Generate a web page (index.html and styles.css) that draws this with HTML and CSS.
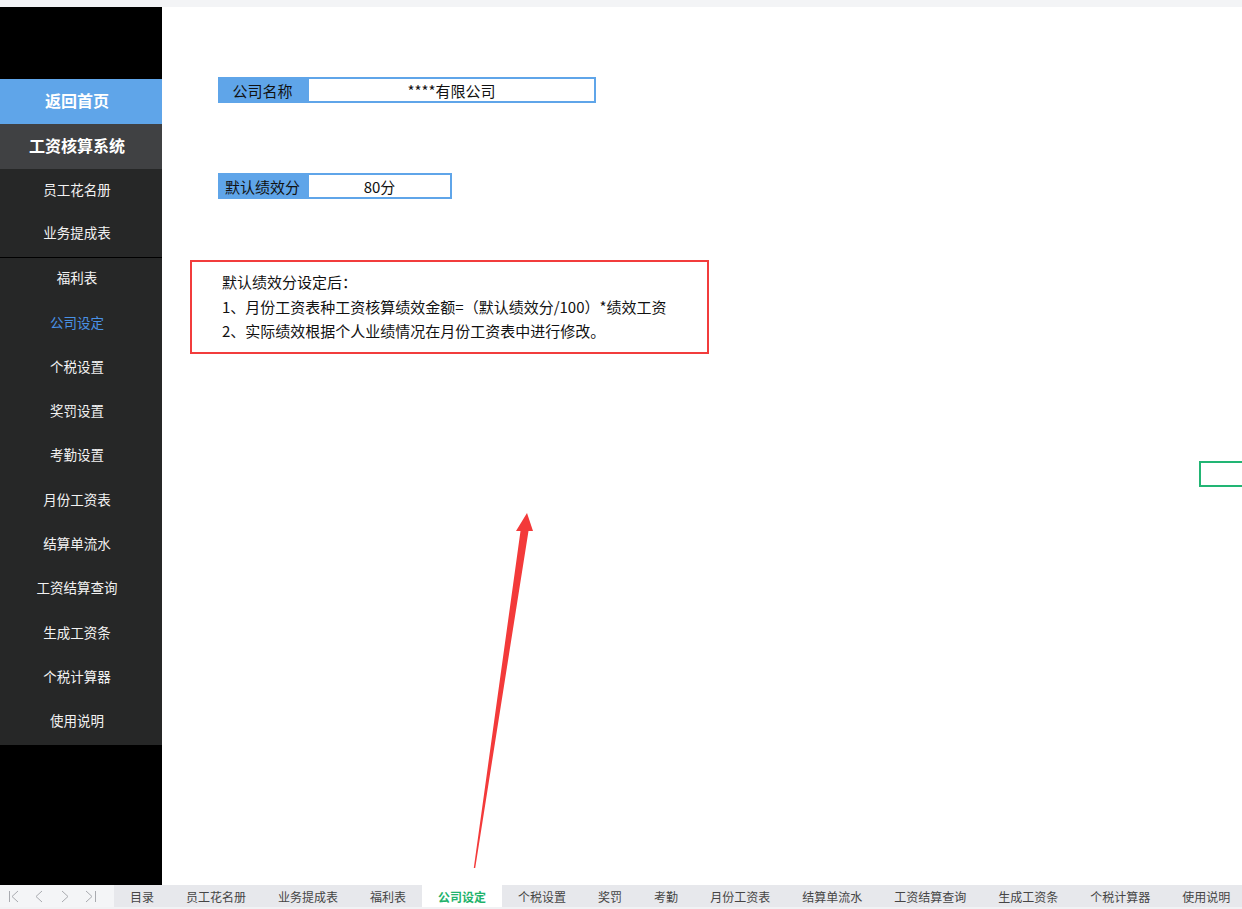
FILE: index.html
```html
<!DOCTYPE html>
<html lang="zh-CN">
<head>
  <meta charset="UTF-8" />
  <title>公司设定 - 工资核算系统</title>
  <link rel="stylesheet" href="styles.css">
</head>
<body>
  <div class="topbar"></div>
  <div class="workspace">
    <aside class="sidebar">
      <div class="sb-blank"></div>
      <div class="sb-home">返回首页</div>
      <div class="sb-title">工资核算系统</div>
      <ul class="menu">
        <li>员工花名册</li>
        <li class="split">业务提成表</li>
        <li>福利表</li>
        <li class="current">公司设定</li>
        <li>个税设置</li>
        <li>奖罚设置</li>
        <li>考勤设置</li>
        <li>月份工资表</li>
        <li>结算单流水</li>
        <li>工资结算查询</li>
        <li>生成工资条</li>
        <li>个税计算器</li>
        <li>使用说明</li>
      </ul>
    </aside>

    <main class="sheet">
      <div class="field">
        <div class="field-label">公司名称</div>
        <div class="field-value wide">****有限公司</div>
      </div>
      <div class="field">
        <div class="field-label">默认绩效分</div>
        <div class="field-value">80分</div>
      </div>
      <div class="note">
        <p>默认绩效分设定后：</p>
        <p>1、月份工资表种工资核算绩效金额=（默认绩效分/100）*绩效工资</p>
        <p>2、实际绩效根据个人业绩情况在月份工资表中进行修改。</p>
      </div>
      <div class="cell-cursor"></div>
    </main>
  </div>

  <footer class="tabbar">
    <div class="tab-nav">
      <svg width="112" height="24" viewBox="0 0 112 24">
        <g fill="none" stroke="#a9abb0" stroke-width="1">
          <path d="M9.5 6v11M18 6l-6 5.5 6 5.5" />
          <path d="M42 6l-6 5.5 6 5.5" />
          <path d="M62 6l6 5.5-6 5.5" />
          <path d="M86 6l6 5.5-6 5.5M95.5 6v11" />
        </g>
      </svg>
    </div>
    <ul class="tabs">
      <li>目录</li>
      <li>员工花名册</li>
      <li>业务提成表</li>
      <li>福利表</li>
      <li class="active">公司设定</li>
      <li>个税设置</li>
      <li>奖罚</li>
      <li>考勤</li>
      <li>月份工资表</li>
      <li>结算单流水</li>
      <li>工资结算查询</li>
      <li>生成工资条</li>
      <li>个税计算器</li>
      <li>使用说明</li>
    </ul>
  </footer>

  <!-- annotation arrow drawn over the sheet -->
  <svg class="arrow" width="1242" height="909" viewBox="0 0 1242 909">
    <polygon fill="#f33a3a" points="527,513 533,531 528.5,531 475.2,868 473.8,868 520.5,531 516,531" />
  </svg>
</body>
</html>
```

FILE: styles.css
```css
* {
  box-sizing: border-box;
}

body {
  margin: 0;
  width: 1242px;
  height: 909px;
  overflow: hidden;
  position: relative;
  background: #fff;
  font-family: "Noto Sans CJK SC", "Noto Sans", sans-serif;
  color: #111;
  text-spacing-trim: space-all;
}

ul {
  list-style: none;
  margin: 0;
  padding: 0;
}

p {
  margin: 0;
}

.topbar {
  height: 7px;
  background: #f3f4f6;
}

.workspace {
  display: flex;
  height: 878px;
}

/* left navigation */
.sidebar {
  width: 162px;
  flex-shrink: 0;
  background: #000;
  display: flex;
  flex-direction: column;
}

.sb-blank {
  height: 72px;
}

.sb-home,
.sb-title {
  height: 45px;
  display: flex;
  align-items: center;
  justify-content: center;
  padding: 0 8px 4px 0;
  font-size: 16px;
  font-weight: bold;
  color: #fff;
}

.sb-home {
  background: #5fa5e9;
}

.sb-title {
  background: #404143;
}

.menu {
  background: #262727;
}

.menu li {
  height: 44.3px;
  display: flex;
  align-items: center;
  justify-content: center;
  padding: 0 8px 5px 0;
  font-size: 13.5px;
  color: #f2f2f2;
}

.menu li.split {
  border-bottom: 1px solid #000;
}

.menu li.current {
  color: #4a92e6;
}

/* sheet area */
.sheet {
  flex: 1;
  position: relative;
  padding: 70px 0 0 56px;
}

.field {
  display: flex;
  height: 26px;
  margin-bottom: 70px;
  font-size: 15px;
}

.field-label {
  width: 89px;
  background: #5fa5e9;
  display: flex;
  align-items: center;
  justify-content: center;
  color: #111;
}

.field-value {
  width: 145px;
  border: 2px solid #5fa5e9;
  display: flex;
  align-items: center;
  justify-content: center;
}

.field-value.wide {
  width: 289px;
}

.note {
  width: 519px;
  height: 94px;
  margin: -9px 0 0 -28px;
  border: 2px solid #f23c3c;
  padding: 8px 0 0 30px;
  font-size: 15px;
  line-height: 24.5px;
}

.cell-cursor {
  position: absolute;
  left: 1037px;
  top: 454px;
  width: 60px;
  height: 26px;
  border: 2px solid #22b574;
}

/* sheet tabs */
.tabbar {
  display: flex;
  height: 24px;
  background: #e7e8ec;
  border-bottom: 2px solid #f1f2f4;
}

.tab-nav {
  width: 114px;
  flex-shrink: 0;
  background: #f4f5f7;
}

.tab-nav svg {
  display: block;
}

.tabs {
  display: flex;
}

.tabs li {
  padding: 0 16px;
  display: flex;
  align-items: center;
  font-size: 12px;
  color: #454545;
  white-space: nowrap;
}

.tabs li.active {
  background: #fff;
  color: #1fb36c;
  font-weight: bold;
}

.arrow {
  position: absolute;
  left: 0;
  top: 0;
  pointer-events: none;
}
```
